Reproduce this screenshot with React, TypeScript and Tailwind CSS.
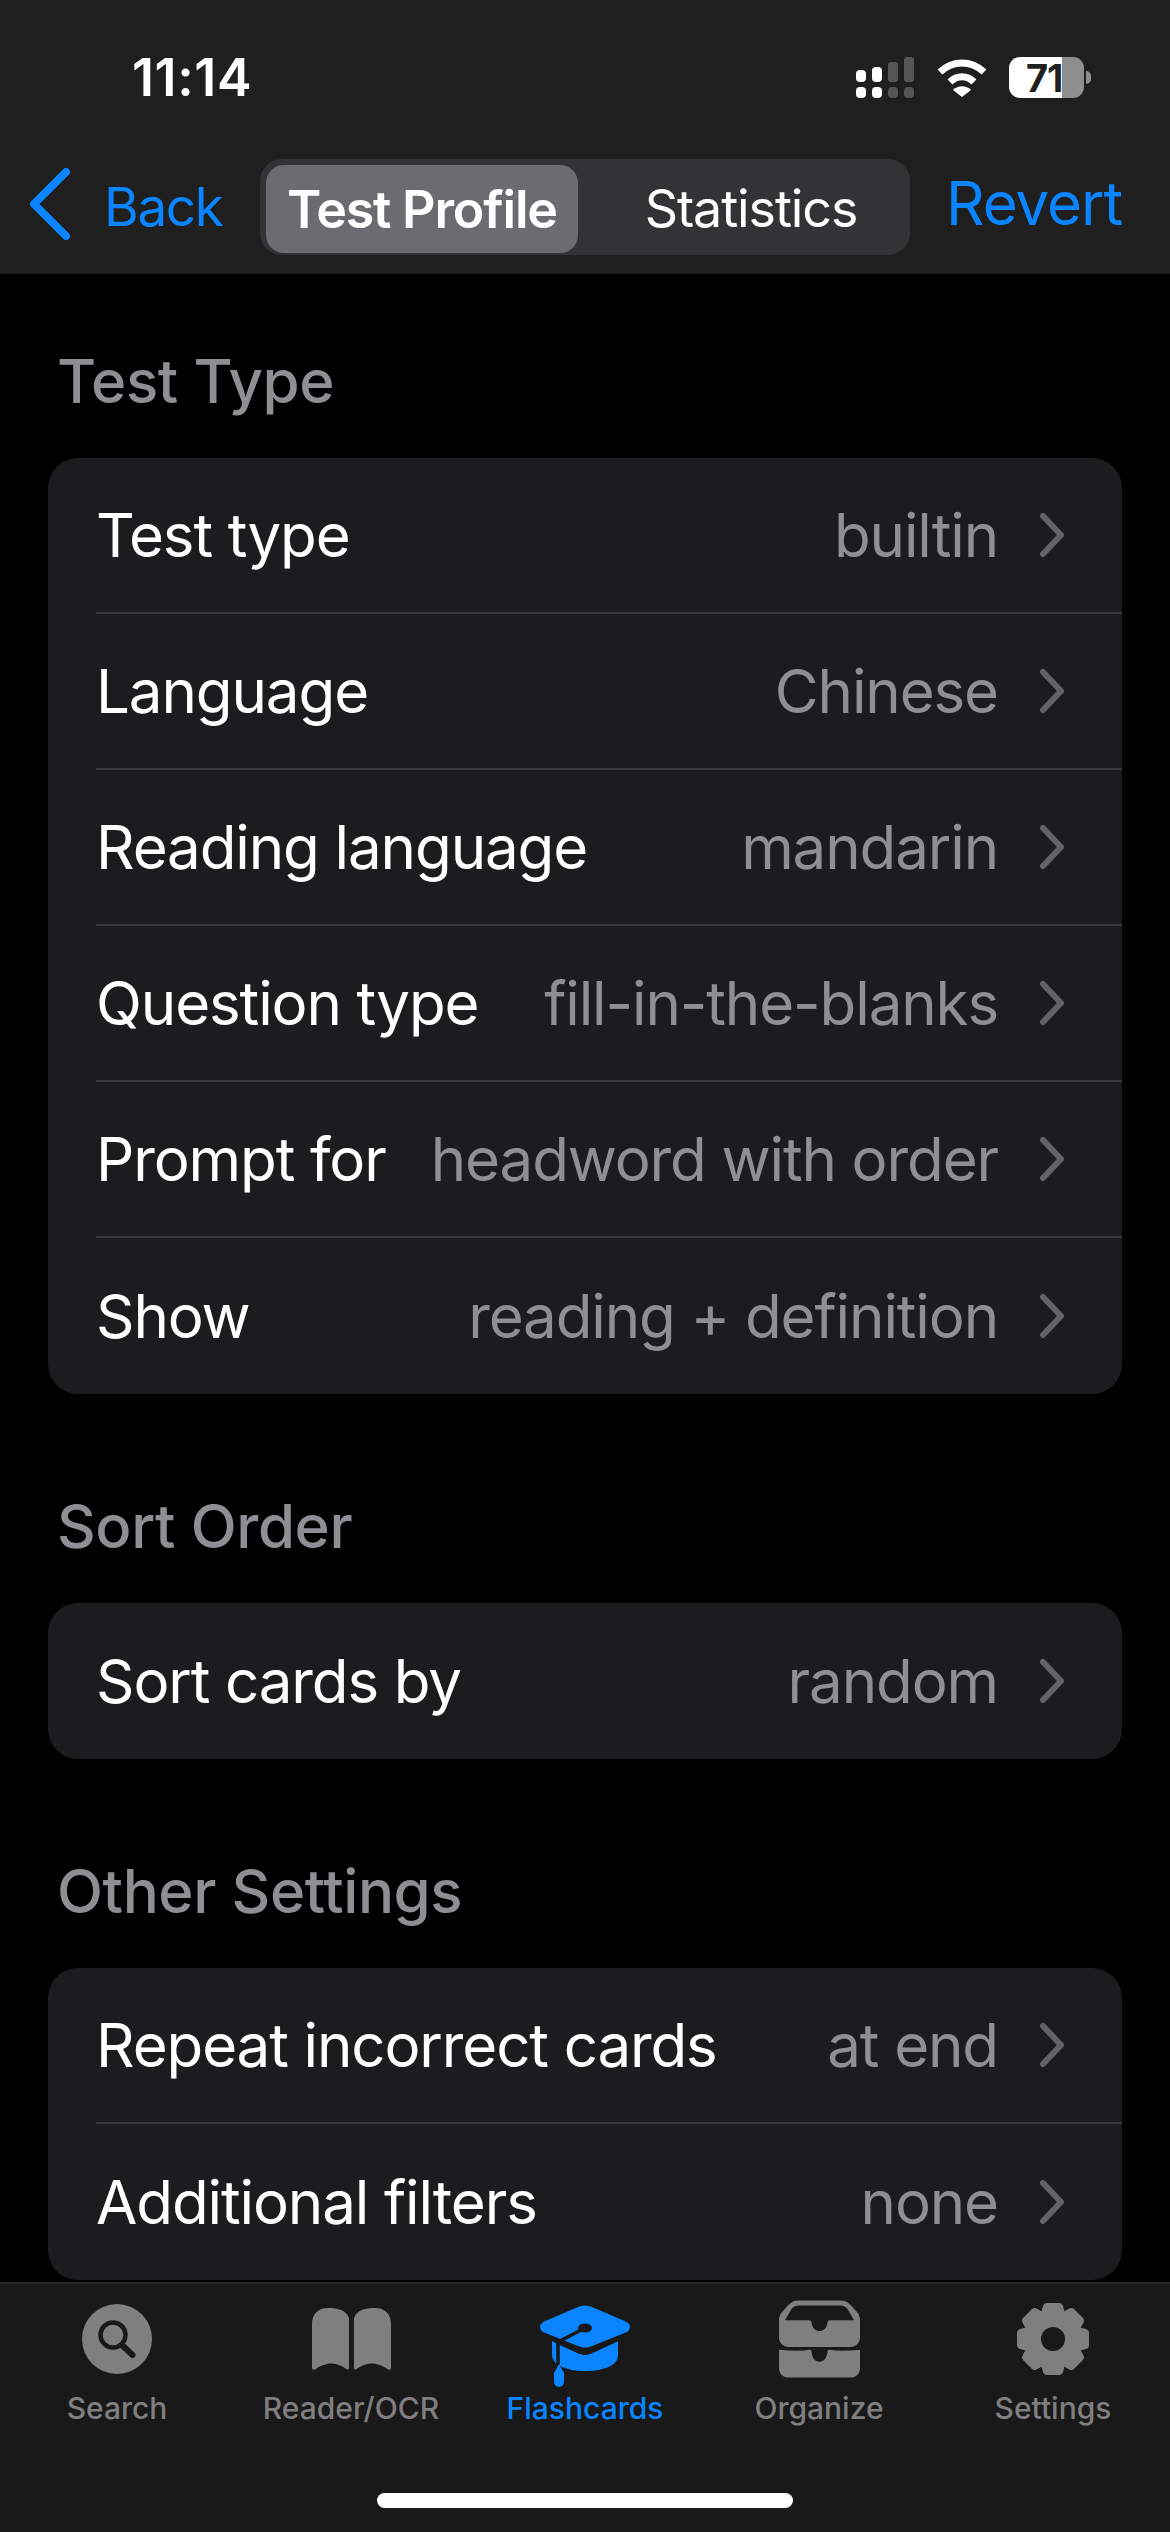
const font = "font-['Inter','Liberation_Sans',sans-serif]";

type Row = { label: string; value: string };

const sections: { title: string; rows: Row[] }[] = [
  {
    title: "Test Type",
    rows: [
      { label: "Test type", value: "builtin" },
      { label: "Language", value: "Chinese" },
      { label: "Reading language", value: "mandarin" },
      { label: "Question type", value: "fill-in-the-blanks" },
      { label: "Prompt for", value: "headword with order" },
      { label: "Show", value: "reading + definition" },
    ],
  },
  { title: "Sort Order", rows: [{ label: "Sort cards by", value: "random" }] },
  {
    title: "Other Settings",
    rows: [
      { label: "Repeat incorrect cards", value: "at end" },
      { label: "Additional filters", value: "none" },
    ],
  },
];

function StatusIcons() {
  return (
    <div className="flex items-center">
      <svg width="58" height="41" viewBox="0 0 58 41">
        <g fill="#fff">
          <rect x="0" y="13" width="10" height="12" rx="4" />
          <rect x="0" y="30" width="10" height="11" rx="4" />
          <rect x="16" y="10" width="10" height="15" rx="4" />
          <rect x="16" y="30" width="10" height="11" rx="4" />
        </g>
        <g fill="#555">
          <rect x="32" y="5" width="10" height="20" rx="3" />
          <rect x="32" y="30" width="10" height="11" rx="4" />
          <rect x="48" y="0" width="10" height="25" rx="3" />
          <rect x="48" y="30" width="10" height="11" rx="4" />
        </g>
      </svg>
      <svg className="ml-[23px]" width="50" height="38" viewBox="0 0 50 38" fill="none" stroke="#fff" strokeWidth="7">
        <path d="M3 13C16 1 34 1 47 13" />
        <path d="M13 23C20 16 30 16 37 23" />
        <path d="M16 31L25 38L34 31C29 26 21 26 16 31Z" fill="#fff" stroke="none" />
      </svg>
      <div className="ml-[22px] flex items-center">
        <div className="relative flex h-[41px] w-[75px]">
          <div className="w-[53px] rounded-l-[11px] bg-white" />
          <div className="flex-1 rounded-r-[11px] bg-[#8e8e8e]" />
          <span className={`${font} absolute left-[17px] top-[1px] text-[38px] font-bold leading-[40px] tracking-[-1px] text-[#1f1f1f]`}>71</span>
        </div>
        <div className="ml-[2px] h-[13px] w-[5px] rounded-r-full bg-[#8e8e8e]" />
      </div>
    </div>
  );
}

function TabIcon({ name, color }: { name: string; color: string }) {
  if (name === "search") {
    return (
      <svg width="70" height="70" viewBox="0 0 70 70">
        <circle cx="35" cy="35" r="35" fill={color} />
        <circle cx="31" cy="31" r="12.5" fill="none" stroke="#191919" strokeWidth="4.5" />
        <path d="M40 41L50.5 51" stroke="#191919" strokeWidth="6" strokeLinecap="round" />
      </svg>
    );
  }
  if (name === "book") {
    return (
      <svg width="79" height="62" viewBox="0 0 79 62">
        <path d="M0 16C0 6 6 0 16 0C26 0 34 2 37 10V60Q37 62 35 61.5C30 58 25 55.5 20 55.5C13 55.5 8 58 3 61.5Q0 62.5 0 60Z" fill={color} />
        <path d="M79 16C79 6 73 0 63 0C53 0 45 2 42 10V60Q42 62 44 61.5C49 58 54 55.5 59 55.5C66 55.5 71 58 76 61.5Q79 62.5 79 60Z" fill={color} />
      </svg>
    );
  }
  if (name === "cap") {
    return (
      <svg className="mt-[14px]" width="92" height="82" viewBox="0 0 92 82">
        <path d="M13 36L46 50L79 36V50C79 60 66 66 46 66C28 66 13 60 13 50Z" fill={color} />
        <path d="M16 36L40 47Q46 49.5 52 47L80 34" fill="none" stroke="#191919" strokeWidth="3.5" />
        <path d="M39 2Q46 -1 53 2L88 17Q94 22 88 27L53 41Q46 44 39 41L4 27Q-2 22 4 17Z" fill={color} />
        <path d="M46 23L19 37V60" fill="none" stroke="#191919" strokeWidth="3.5" />
        <ellipse cx="46" cy="23" rx="7" ry="4.5" fill="#191919" />
        <path d="M20 59L25 68V77A5 5 0 0 1 15 77V68Z" fill={color} />
      </svg>
    );
  }
  if (name === "tray") {
    return (
      <svg width="81" height="78" viewBox="0 0 82 78">
        <path
          fillRule="evenodd"
          d="M20 0H62C67 0 70 2 73 5L80 13C81 15 82 17 82 20V37C82 43 78 47 72 47H10C4 47 0 43 0 37V20C0 17 1 15 2 13L9 5C12 2 15 0 20 0ZM20 5C17 5 15 6 13 8L6 20H30C32 20 33 21 33 23C34 28 37 31 41 31C45 31 48 28 49 23C49 21 50 20 52 20H76L69 8C67 6 65 5 62 5Z"
          fill={color}
        />
        <path d="M0 50Q20 52 31 50C33 50 33 51 33 53C34 59 37 62 41 62C45 62 48 59 49 53C49 51 49 50 51 50Q62 52 82 50V68C82 74 78 78 72 78H10C4 78 0 74 0 68Z" fill={color} />
      </svg>
    );
  }
  return (
    <svg width="72" height="72" viewBox="0 0 72 72">
      {[0, 45, 90, 135, 180, 225, 270, 315].map((angle) => (
        <path key={angle} d="M30 0H42Q45 0 46 3L49 14H23L26 3Q27 0 30 0Z" fill={color} transform={`rotate(${angle} 36 36)`} />
      ))}
      <circle cx="36" cy="36" r="27" fill={color} />
      <circle cx="36" cy="36" r="12" fill="#191919" />
    </svg>
  );
}

const tabs = [
  { name: "search", label: "Search" },
  { name: "book", label: "Reader/OCR" },
  { name: "cap", label: "Flashcards", active: true },
  { name: "tray", label: "Organize" },
  { name: "gear", label: "Settings" },
];

export default function App() {
  return (
    <div className={`${font} flex h-[2532px] w-[1170px] flex-col overflow-hidden bg-black`}>
      <header className="h-[274px] shrink-0 bg-[#1f1f1f]">
        <div className="flex h-[159px] items-start justify-between pl-[132px] pr-[79px] pt-[52px]">
          <span className="text-[52px] font-semibold leading-[52px] tracking-[0.6px] text-white">11:14</span>
          <div className="pt-[5px]">
            <StatusIcons />
          </div>
        </div>
        <div className="flex items-start pl-[29px]">
          <svg className="mt-[9px]" width="42" height="72" viewBox="0 0 42 72" fill="none" stroke="#0a84ff" strokeWidth="8" strokeLinecap="round" strokeLinejoin="round">
            <path d="M37 4L5 36L37 68" />
          </svg>
          <span className="ml-[33px] mt-[16px] w-[121px] text-[53px] leading-[64px] tracking-[-1.3px] text-[#0a84ff]">Back</span>
          <div className="ml-[35px] flex h-[96px] w-[650px] rounded-[22px] bg-[#333336] p-[6px] pb-[4px] pt-[8px]">
            <div className="-mb-[2px] -mt-[2px] flex w-[312px] items-center justify-center rounded-[18px] bg-[#6c6c70] pt-[2px] text-[52px] font-semibold tracking-[-1.2px] text-white">Test Profile</div>
            <div className="flex flex-1 items-center justify-center pl-[20px] text-[52px] tracking-[-1.1px] text-white">Statistics</div>
          </div>
          <span className="ml-[36px] mt-[12px] text-[60px] leading-[64px] tracking-[-1px] text-[#0a84ff]">Revert</span>
        </div>
      </header>

      <main className="min-h-0 flex-1 overflow-hidden px-[48px] pt-[77px]">
        {sections.map((section) => (
          <section key={section.title}>
            <h2 className="flex h-[60px] items-center pl-[9px] text-[60px] font-medium tracking-[-0.4px] text-[#8e8e93]">{section.title}</h2>
            <div className="mb-[102px] mt-[47px] rounded-[30px] bg-[#1c1c1e]">
              {section.rows.map((row, index) => (
                <div key={row.label} className="pl-[48px]">
                  <div className={`flex h-[156px] items-center pr-[56px] ${index < section.rows.length - 1 ? "border-b-2 border-[#38383a]" : ""}`}>
                    <span className="whitespace-nowrap text-[60px] tracking-[-1.1px] text-white">{row.label}</span>
                    <span className="ml-auto whitespace-nowrap text-[60px] tracking-[-1.1px] text-[#8e8e93]">{row.value}</span>
                    <svg className="ml-[40px]" width="28" height="46" viewBox="0 0 28 46" fill="none" stroke="#636366" strokeWidth="6" strokeLinecap="round" strokeLinejoin="round">
                      <path d="M5 4L23 23L5 42" />
                    </svg>
                  </div>
                </div>
              ))}
            </div>
          </section>
        ))}
      </main>

      <nav className="h-[250px] shrink-0 border-t-2 border-[#262626] bg-[#191919]">
        <div className="grid grid-cols-5">
          {tabs.map((tab) => {
            const color = tab.active ? "#0a84ff" : "#7f7f7f";
            return (
              <div key={tab.label} className="flex flex-col items-center">
                <div className="flex h-[104px] items-center pt-[6px]">
                  <TabIcon name={tab.name} color={color} />
                </div>
                <span className="text-[30px] font-medium leading-[40px]" style={{ color }}>{tab.label}</span>
              </div>
            );
          })}
        </div>
        <div className="mx-auto mt-[65px] h-[15px] w-[416px] rounded-full bg-white" />
      </nav>
    </div>
  );
}
